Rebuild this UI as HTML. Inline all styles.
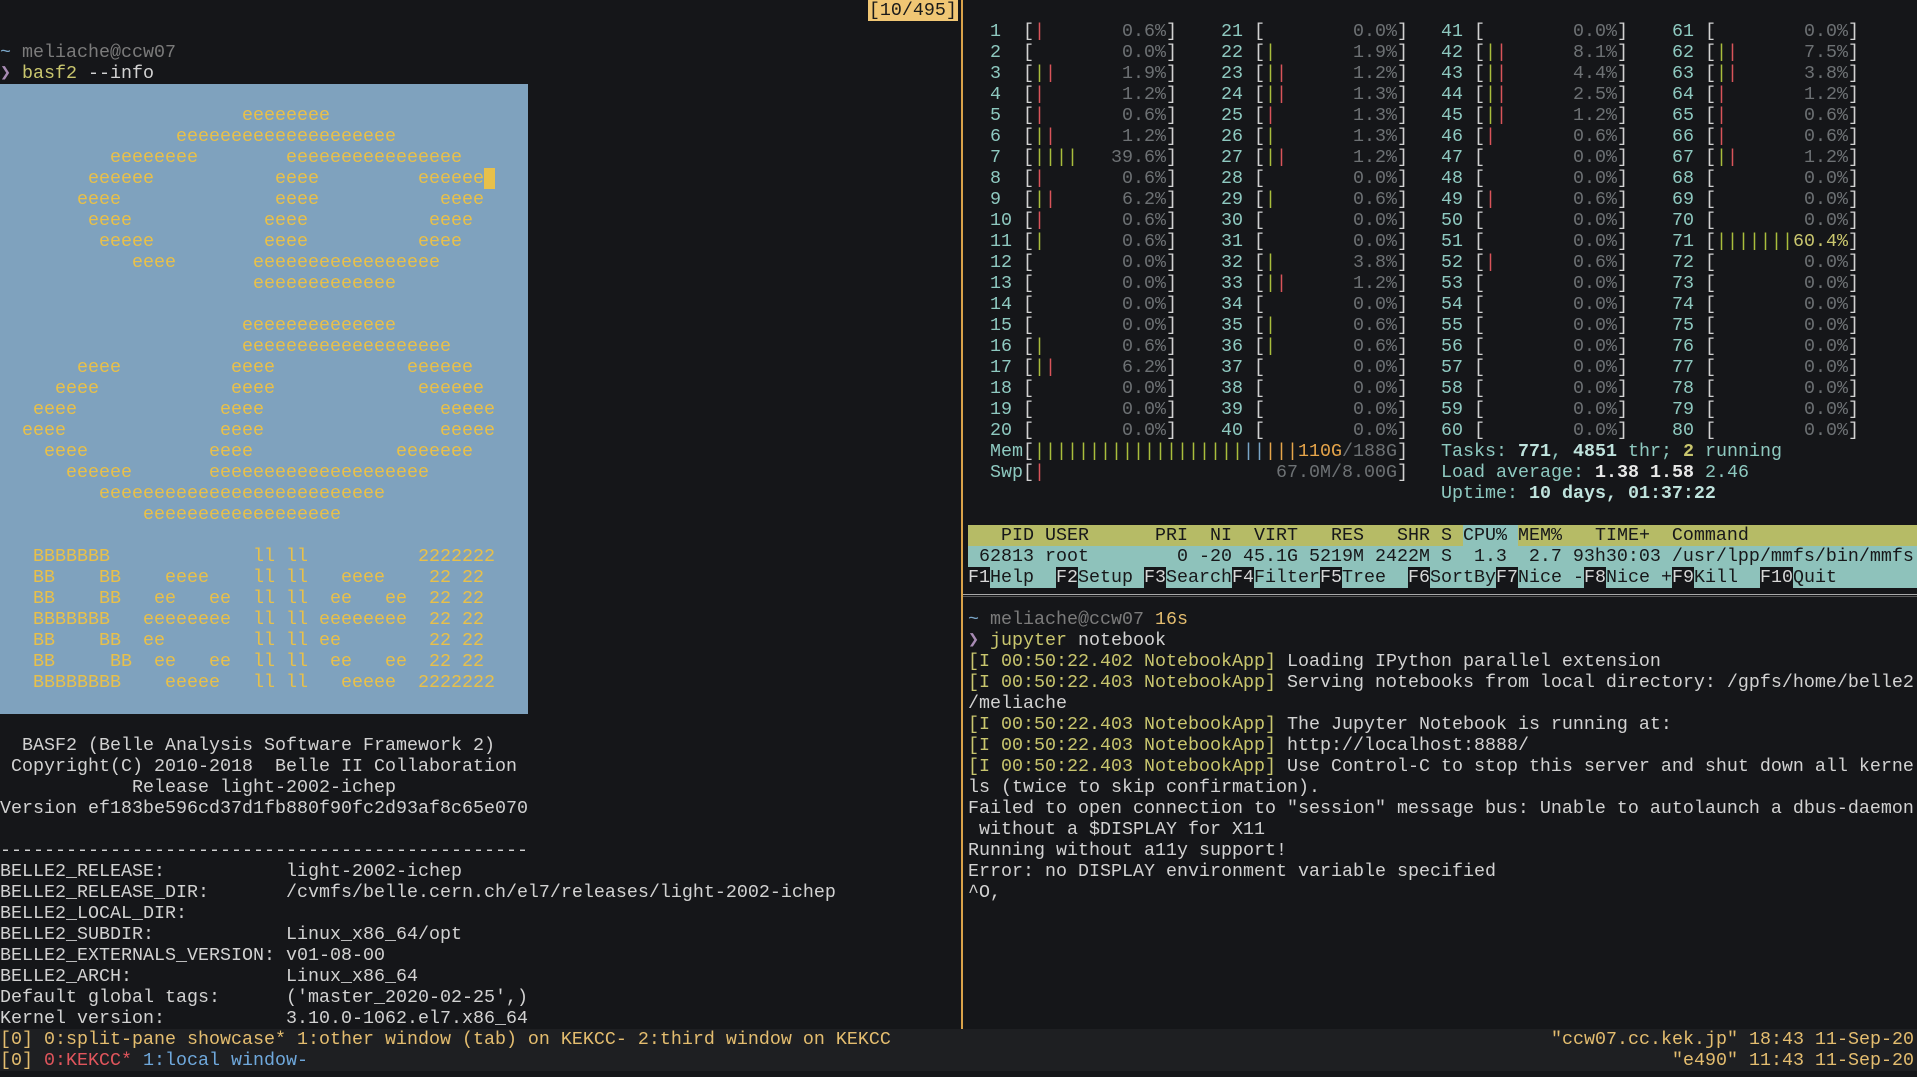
<!DOCTYPE html>
<html><head><meta charset="utf-8">
<style>
html,body{margin:0;padding:0;background:#151619;width:1917px;height:1077px;overflow:hidden}
.t{position:absolute;top:0;font-family:"Liberation Mono","DejaVu Sans Mono",monospace;font-size:18.333px;line-height:21px;white-space:normal;color:#d2d2d2}
.t div{height:21px;white-space:pre}
.gy{color:#7b7b7b}.bl{color:#7aa6c8}.pu{color:#a88bb4}.yg{color:#c9c66e}.ye{color:#e4bd6f}
.art{color:#e8c04a}
b{font-weight:normal;color:#8ec9c0}
u{text-decoration:none;color:#6d7174}
i{font-style:normal}
.g{color:#a9bd3c}.r{color:#d9545a}.o{color:#e6a54a}.bb{color:#7aa6c8}
.w{font-weight:bold;color:#bfe3dd}
.y2{font-weight:bold;color:#c9c66e}
.hd{background:#b6bb66;color:#17181a}
.cp{background:#8ec2bb}
.pr{background:#8ec2bb;color:#17181a}
.fk{background:#8ec2bb;color:#17181a}
.fk span{background:#151619;color:#d8d8d8}
.red{color:#e0555c}.blu{color:#6fa8dc}
</style></head><body>
<div style="position:absolute;left:0;top:84px;width:528px;height:630px;background:#7fa2be"></div>
<div style="position:absolute;left:868px;top:0;width:90px;height:21px;background:#f0c674"></div>
<div style="position:absolute;left:484px;top:168px;width:11px;height:21px;background:#e8c04a"></div>
<div style="position:absolute;left:961px;top:0;width:2px;height:1029px;background:#d9a24a"></div>
<div style="position:absolute;left:963px;top:594px;right:0;height:1px;border-top:1px solid #a8a8a8;border-bottom:1px solid #5a5a5a"></div>
<div style="position:absolute;left:0;top:1029px;width:1917px;height:42px;background:#1e1f22"></div>

<div class="t" style="left:0">
<div>                                                                               <span style="color:#1a1a1a">[10/495]</span></div>
<div> </div>
<div><span class="bl">~</span> <span class="gy">meliache@ccw07</span></div>
<div><span class="pu">❯</span> <span class="yg">basf2</span> --info</div>
<div class="art"> </div>
<div class="art">                      eeeeeeee</div>
<div class="art">                eeeeeeeeeeeeeeeeeeee</div>
<div class="art">          eeeeeeee        eeeeeeeeeeeeeeee</div>
<div class="art">        eeeeee           eeee         eeeeee</div>
<div class="art">       eeee              eeee           eeee</div>
<div class="art">        eeee            eeee           eeee</div>
<div class="art">         eeeee          eeee          eeee</div>
<div class="art">            eeee       eeeeeeeeeeeeeeeee</div>
<div class="art">                       eeeeeeeeeeeee</div>
<div class="art"> </div>
<div class="art">                      eeeeeeeeeeeeee</div>
<div class="art">                      eeeeeeeeeeeeeeeeeee</div>
<div class="art">       eeee          eeee            eeeeee</div>
<div class="art">     eeee            eeee             eeeeee</div>
<div class="art">   eeee             eeee                eeeee</div>
<div class="art">  eeee              eeee                eeeee</div>
<div class="art">    eeee           eeee             eeeeeee</div>
<div class="art">      eeeeee       eeeeeeeeeeeeeeeeeeee</div>
<div class="art">         eeeeeeeeeeeeeeeeeeeeeeeeee</div>
<div class="art">             eeeeeeeeeeeeeeeeee</div>
<div class="art"> </div>
<div class="art">   BBBBBBB             ll ll          2222222</div>
<div class="art">   BB    BB    eeee    ll ll   eeee    22 22</div>
<div class="art">   BB    BB   ee   ee  ll ll  ee   ee  22 22</div>
<div class="art">   BBBBBBB   eeeeeeee  ll ll eeeeeeee  22 22</div>
<div class="art">   BB    BB  ee        ll ll ee        22 22</div>
<div class="art">   BB     BB  ee   ee  ll ll  ee   ee  22 22</div>
<div class="art">   BBBBBBBB    eeeee   ll ll   eeeee  2222222</div>
<div> </div>
<div> </div>
<div>  BASF2 (Belle Analysis Software Framework 2)</div>
<div> Copyright(C) 2010-2018  Belle II Collaboration</div>
<div>            Release light-2002-ichep</div>
<div>Version ef183be596cd37d1fb880f90fc2d93af8c65e070</div>
<div> </div>
<div>------------------------------------------------</div>
<div>BELLE2_RELEASE:           light-2002-ichep</div>
<div>BELLE2_RELEASE_DIR:       /cvmfs/belle.cern.ch/el7/releases/light-2002-ichep</div>
<div>BELLE2_LOCAL_DIR:</div>
<div>BELLE2_SUBDIR:            Linux_x86_64/opt</div>
<div>BELLE2_EXTERNALS_VERSION: v01-08-00</div>
<div>BELLE2_ARCH:              Linux_x86_64</div>
<div>Default global tags:      ('master_2020-02-25',)</div>
<div>Kernel version:           3.10.0-1062.el7.x86_64</div>
<div class="ye">[0] 0:split-pane showcase* 1:other window (tab) on KEKCC- 2:third window on KEKCC</div>
<div><span class="ye">[0] </span><span class="red">0:KEKCC*</span><span class="blu"> 1:local window-</span></div>
</div>

<div class="t" style="right:3px;top:1029px;text-align:right;color:#e4bd6f">
<div>"ccw07.cc.kek.jp" 18:43 11-Sep-20</div>
<div>"e490" 11:43 11-Sep-20</div>
</div>

<div class="t" style="left:968px;width:949px">
<div> </div>
<div>  <b>1 </b> [<i class="r">|</i>       <u>0.6%</u>]    <b>21</b> [        <u>0.0%</u>]   <b>41</b> [        <u>0.0%</u>]    <b>61</b> [        <u>0.0%</u>]</div>
<div>  <b>2 </b> [        <u>0.0%</u>]    <b>22</b> [<i class="g">|</i>       <u>1.9%</u>]   <b>42</b> [<i class="g">|</i><i class="r">|</i>      <u>8.1%</u>]    <b>62</b> [<i class="g">|</i><i class="r">|</i>      <u>7.5%</u>]</div>
<div>  <b>3 </b> [<i class="g">|</i><i class="r">|</i>      <u>1.9%</u>]    <b>23</b> [<i class="g">|</i><i class="r">|</i>      <u>1.2%</u>]   <b>43</b> [<i class="g">|</i><i class="r">|</i>      <u>4.4%</u>]    <b>63</b> [<i class="g">|</i><i class="r">|</i>      <u>3.8%</u>]</div>
<div>  <b>4 </b> [<i class="r">|</i>       <u>1.2%</u>]    <b>24</b> [<i class="g">|</i><i class="r">|</i>      <u>1.3%</u>]   <b>44</b> [<i class="g">|</i><i class="r">|</i>      <u>2.5%</u>]    <b>64</b> [<i class="r">|</i>       <u>1.2%</u>]</div>
<div>  <b>5 </b> [<i class="r">|</i>       <u>0.6%</u>]    <b>25</b> [<i class="r">|</i>       <u>1.3%</u>]   <b>45</b> [<i class="g">|</i><i class="r">|</i>      <u>1.2%</u>]    <b>65</b> [<i class="r">|</i>       <u>0.6%</u>]</div>
<div>  <b>6 </b> [<i class="g">|</i><i class="r">|</i>      <u>1.2%</u>]    <b>26</b> [<i class="g">|</i>       <u>1.3%</u>]   <b>46</b> [<i class="r">|</i>       <u>0.6%</u>]    <b>66</b> [<i class="r">|</i>       <u>0.6%</u>]</div>
<div>  <b>7 </b> [<i class="g">||||</i>   <u>39.6%</u>]    <b>27</b> [<i class="g">|</i><i class="r">|</i>      <u>1.2%</u>]   <b>47</b> [        <u>0.0%</u>]    <b>67</b> [<i class="g">|</i><i class="r">|</i>      <u>1.2%</u>]</div>
<div>  <b>8 </b> [<i class="r">|</i>       <u>0.6%</u>]    <b>28</b> [        <u>0.0%</u>]   <b>48</b> [        <u>0.0%</u>]    <b>68</b> [        <u>0.0%</u>]</div>
<div>  <b>9 </b> [<i class="g">|</i><i class="r">|</i>      <u>6.2%</u>]    <b>29</b> [<i class="g">|</i>       <u>0.6%</u>]   <b>49</b> [<i class="r">|</i>       <u>0.6%</u>]    <b>69</b> [        <u>0.0%</u>]</div>
<div>  <b>10</b> [<i class="r">|</i>       <u>0.6%</u>]    <b>30</b> [        <u>0.0%</u>]   <b>50</b> [        <u>0.0%</u>]    <b>70</b> [        <u>0.0%</u>]</div>
<div>  <b>11</b> [<i class="g">|</i>       <u>0.6%</u>]    <b>31</b> [        <u>0.0%</u>]   <b>51</b> [        <u>0.0%</u>]    <b>71</b> [<i class="g">|||||||</i><span class="yg">60.4%</span>]</div>
<div>  <b>12</b> [        <u>0.0%</u>]    <b>32</b> [<i class="g">|</i>       <u>3.8%</u>]   <b>52</b> [<i class="r">|</i>       <u>0.6%</u>]    <b>72</b> [        <u>0.0%</u>]</div>
<div>  <b>13</b> [        <u>0.0%</u>]    <b>33</b> [<i class="g">|</i><i class="r">|</i>      <u>1.2%</u>]   <b>53</b> [        <u>0.0%</u>]    <b>73</b> [        <u>0.0%</u>]</div>
<div>  <b>14</b> [        <u>0.0%</u>]    <b>34</b> [        <u>0.0%</u>]   <b>54</b> [        <u>0.0%</u>]    <b>74</b> [        <u>0.0%</u>]</div>
<div>  <b>15</b> [        <u>0.0%</u>]    <b>35</b> [<i class="g">|</i>       <u>0.6%</u>]   <b>55</b> [        <u>0.0%</u>]    <b>75</b> [        <u>0.0%</u>]</div>
<div>  <b>16</b> [<i class="g">|</i>       <u>0.6%</u>]    <b>36</b> [<i class="g">|</i>       <u>0.6%</u>]   <b>56</b> [        <u>0.0%</u>]    <b>76</b> [        <u>0.0%</u>]</div>
<div>  <b>17</b> [<i class="g">|</i><i class="r">|</i>      <u>6.2%</u>]    <b>37</b> [        <u>0.0%</u>]   <b>57</b> [        <u>0.0%</u>]    <b>77</b> [        <u>0.0%</u>]</div>
<div>  <b>18</b> [        <u>0.0%</u>]    <b>38</b> [        <u>0.0%</u>]   <b>58</b> [        <u>0.0%</u>]    <b>78</b> [        <u>0.0%</u>]</div>
<div>  <b>19</b> [        <u>0.0%</u>]    <b>39</b> [        <u>0.0%</u>]   <b>59</b> [        <u>0.0%</u>]    <b>79</b> [        <u>0.0%</u>]</div>
<div>  <b>20</b> [        <u>0.0%</u>]    <b>40</b> [        <u>0.0%</u>]   <b>60</b> [        <u>0.0%</u>]    <b>80</b> [        <u>0.0%</u>]</div>
<div>  <b>Mem</b>[<i class="g">|||||||||||||||||||</i><i class="bb">||</i><i class="o">|||110G</i><u>/188G</u>]   <b>Tasks: </b><span class="w">771</span><b>, </b><span class="w">4851</span><b> thr; </b><span class="y2">2</span><b> running</b></div>
<div>  <b>Swp</b>[<i class="r">|</i>                     <u>67.0M/8.00G</u>]   <b>Load average: </b><span style="font-weight:bold;color:#e8e8e8">1.38 1.58 </span><b>2.46</b></div>
<div>                                           <b>Uptime: </b><span class="w">10 days, 01:37:22</span></div>
<div> </div>
<div class="hd">   PID USER      PRI  NI  VIRT   RES   SHR S <span class="cp">CPU% </span>MEM%   TIME+  Command</div>
<div class="pr"> 62813 root        0 -20 45.1G 5219M 2422M S  1.3  2.7 93h30:03 /usr/lpp/mmfs/bin/mmfs</div>
<div class="fk"><span>F1</span>Help  <span>F2</span>Setup <span>F3</span>Search<span>F4</span>Filter<span>F5</span>Tree  <span>F6</span>SortBy<span>F7</span>Nice -<span>F8</span>Nice +<span>F9</span>Kill  <span>F10</span>Quit     </div>
<div> </div>
<div><span class="bl">~</span> <span class="gy">meliache@ccw07</span> <span class="ye">16s</span></div>
<div><span class="pu">❯</span> <span class="yg">jupyter</span> notebook</div>
<div><span class="yg">[I 00:50:22.402 NotebookApp]</span> Loading IPython parallel extension</div>
<div><span class="yg">[I 00:50:22.403 NotebookApp]</span> Serving notebooks from local directory: /gpfs/home/belle2</div>
<div>/meliache</div>
<div><span class="yg">[I 00:50:22.403 NotebookApp]</span> The Jupyter Notebook is running at:</div>
<div><span class="yg">[I 00:50:22.403 NotebookApp]</span> http://localhost:8888/</div>
<div><span class="yg">[I 00:50:22.403 NotebookApp]</span> Use Control-C to stop this server and shut down all kerne</div>
<div>ls (twice to skip confirmation).</div>
<div>Failed to open connection to "session" message bus: Unable to autolaunch a dbus-daemon</div>
<div> without a $DISPLAY for X11</div>
<div>Running without a11y support!</div>
<div>Error: no DISPLAY environment variable specified</div>
<div>^O,</div>
</div>
</body></html>
